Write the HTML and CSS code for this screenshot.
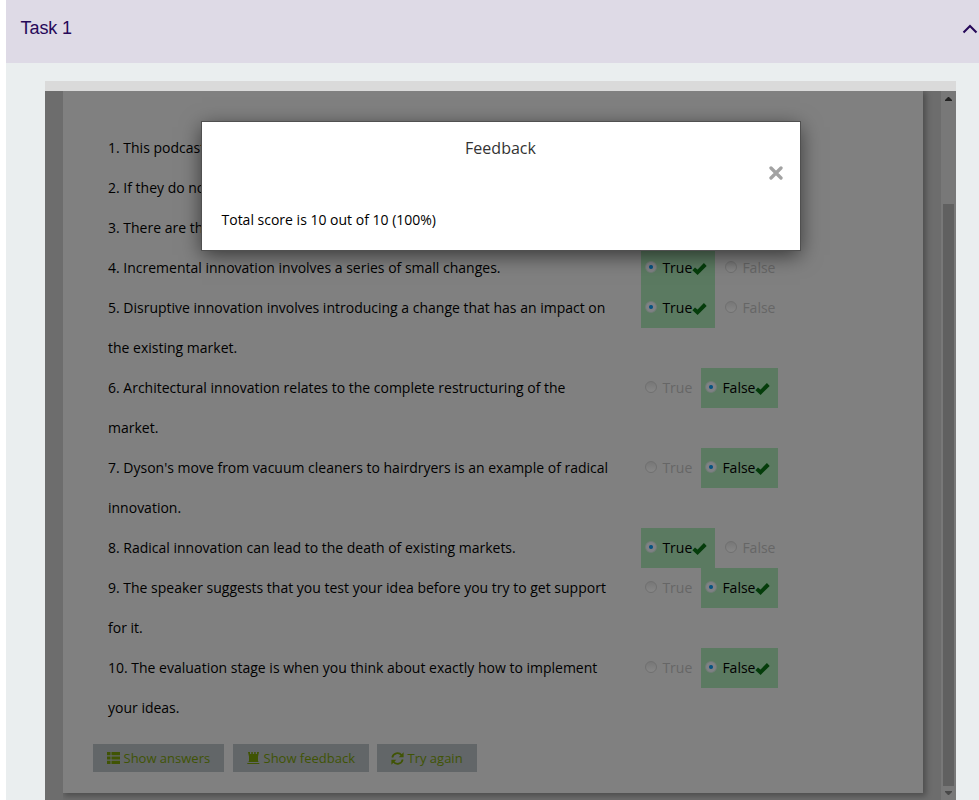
FILE: index.html
```html
<!DOCTYPE html>
<html lang="en">
<head>
<meta charset="utf-8">
<title>Task 1</title>
<link rel="stylesheet" href="styles.css">
</head>
<body>
<svg class="defs" width="0" height="0">
  <symbol id="check" viewBox="0 0 15 12"><path d="M1.700 5.900 5.500 9.300 13.300 1.500" fill="none" stroke="#053d0b" stroke-width="3.900"/></symbol>
</svg>
<section class="task">
  <header class="task-head">
    <h1>Task 1</h1>
    <svg class="chevron" width="16" height="12" viewBox="0 0 16 12"><path d="M1.500 9.500 8 3l6.500 6.500" fill="none" stroke="#260859" stroke-width="2.100"/></svg>
  </header>
  <div class="frame">
    <div class="viewport">
      <main class="sheet">
        <ol class="questions">
          <li><p>1. This podcast</p></li>
          <li><p>2. If they do not</p></li>
          <li><p>3. There are three</p></li>
          <li><p>4. Incremental innovation involves a series of small changes.</p>
            <div class="opts"><label class="ok t"><i></i>True<svg><use href="#check"/></svg></label><label class="off"><i></i>False</label></div></li>
          <li><p>5. Disruptive innovation involves introducing a change that has an impact on<br>the existing market.</p>
            <div class="opts"><label class="ok t"><i></i>True<svg><use href="#check"/></svg></label><label class="off"><i></i>False</label></div></li>
          <li><p>6. Architectural innovation relates to the complete restructuring of the<br>market.</p>
            <div class="opts"><label class="off t"><i></i>True</label><label class="ok"><i></i>False<svg><use href="#check"/></svg></label></div></li>
          <li><p>7. Dyson's move from vacuum cleaners to hairdryers is an example of radical<br>innovation.</p>
            <div class="opts"><label class="off t"><i></i>True</label><label class="ok"><i></i>False<svg><use href="#check"/></svg></label></div></li>
          <li><p>8. Radical innovation can lead to the death of existing markets.</p>
            <div class="opts"><label class="ok t"><i></i>True<svg><use href="#check"/></svg></label><label class="off"><i></i>False</label></div></li>
          <li><p>9. The speaker suggests that you test your idea before you try to get support<br>for it.</p>
            <div class="opts"><label class="off t"><i></i>True</label><label class="ok"><i></i>False<svg><use href="#check"/></svg></label></div></li>
          <li><p>10. The evaluation stage is when you think about exactly how to implement<br>your ideas.</p>
            <div class="opts"><label class="off t"><i></i>True</label><label class="ok"><i></i>False<svg><use href="#check"/></svg></label></div></li>
        </ol>
        <div class="buttons">
          <button class="b1"><svg width="14" height="12" viewBox="0 0 14 12"><path d="M0 0h3.500v3.200H0zM4.500 0H13v3.200H4.500zM0 4.400h3.500v3.200H0zM4.500 4.400H13v3.200H4.500zM0 8.800h3.500V12H0zM4.500 8.800H13V12H4.500z"/></svg><span>Show answers</span></button>
          <button class="b2"><svg width="14" height="12" viewBox="0 0 14 12"><path d="M1 0h2v2h1.300V0h1.500v2h1.400V0h1.500v2H10V0h2l-1 4.500V9l.7 1H1.300L2 9V4.500zM.3 11h12v1H.3z"/></svg><span>Show feedback</span></button>
          <button class="b3"><svg width="14" height="13" viewBox="0 0 14 13"><path d="M1.300 5.500A5.200 5.200 0 0 1 10.600 3.300M11.700 7.500A5.200 5.200 0 0 1 2.400 9.700" fill="none" stroke="#405404" stroke-width="1.700"/><path d="M12.600.3v5H7.700zM.4 12.700v-5h4.900z"/></svg><span>Try again</span></button>
        </div>
      </main>
      <div class="scrollbar">
        <svg width="7" height="4" viewBox="0 0 7 4"><path d="M0 4V3l3-3h1l3 3v1z" fill="#222"/></svg>
        <div class="thumb"></div>
        <svg width="7" height="4" viewBox="0 0 7 4"><path d="M0 0v1l3 3h1l3-3V0z" fill="#484848"/></svg>
      </div>
    </div>
    <div class="dialog" role="dialog">
      <h2>Feedback</h2>
      <svg class="close" width="14" height="14" viewBox="0 0 14 14"><path d="m2 2 10 10M12 2 2 12" stroke="#a2a2a2" stroke-width="3.300" stroke-linecap="round"/></svg>
      <p>Total score is 10 out of 10 (100%)</p>
    </div>
  </div>
</section>
</body>
</html>
```

FILE: styles.css
```css
* { box-sizing: border-box; }
html, body { height: 100%; overflow: hidden; }
body { margin: 0; background: #fff; font: 14px "Open Sans", "Noto Sans", sans-serif; color: #000; }
h1, h2, p, ol { margin: 0; padding: 0; }
.defs { position: absolute; }

.task { margin-left: 6px; height: 800px; background: #eaeeef; }
.task-head { height: 63px; background: #dedae6; display: flex; justify-content: space-between; padding: 17px 1px 0 14.600px; }
.task-head h1 { margin-top: 1px; font: 400 18px/21px "Liberation Sans", Arial, sans-serif; letter-spacing: -.1px; color: #260859; }
.chevron { margin-top: 6px; }

.frame { position: relative; margin: 18px 23px 0 39px; border-top: 10px solid #dadada; height: 719px; overflow: hidden; }
.viewport { display: flex; justify-content: space-between; height: 709px; background: #6d6d6d; padding-left: 18px; }
.sheet { width: 860px; height: 702px; background: #808080; padding: 37px 0 0 45px; box-shadow: 2px 2px 6px 1px rgba(0,0,0,.3); clip-path: inset(0 -12px -12px 0); }
.questions { list-style: none; line-height: 40px; }
.questions li { display: flex; align-items: flex-start; }
.questions p { width: 533px; white-space: nowrap; }
.opts { display: flex; gap: 6px; }
.opts label { display: flex; align-items: center; width: 77px; height: 40px; padding-left: 4px; }
.opts .t.ok { width: 74px; }
.opts .t.off { width: 54px; }
.opts i { width: 12px; height: 12px; margin: -2px 5.400px 0 0; flex: none; border-radius: 50%; border: 1px solid #707070; background: linear-gradient(#777, #878787); }
.ok { background: #5b7a61; }
.ok i { border-color: #6f7c75; background: radial-gradient(circle, #075281 0 1.500px, #7f8184 2.500px); }
.off { color: #666; }
.off i { border-color: #707070; }
.opts svg { width: 15px; height: 12px; margin-top: 1px; flex: none; }

.buttons { display: flex; gap: 9px; margin: 16px 0 0 -15px; }
button { display: flex; align-items: center; height: 28px; padding: 0 0 0 14px; border: 0; background: #626668; font: 13px "Open Sans", sans-serif; color: #405404; fill: #405404; white-space: nowrap; }
button svg { flex: none; margin-right: 2.500px; }
.b1 { width: 131px; }
.b2 { width: 136px; }
.b3 { width: 100px; margin-left: -1px; }

.scrollbar { width: 15px; background: #787878; display: flex; flex-direction: column; align-items: center; padding-top: 6px; }
.thumb { width: 11px; height: 582px; margin: 103px 0 5px; background: #606060; }

.dialog { position: absolute; left: 157px; top: 31px; width: 598px; height: 128px; background: #fff; box-shadow: 0 0 0 1px #505050, 0 5px 20px rgba(0,0,0,.6); }
.dialog h2 { padding: 14px 1px 0 0; text-align: center; font-size: 16px; line-height: 24px; font-weight: 400; color: #333; }
.close { display: block; margin: 6px 17px 0 auto; }
.dialog p { margin: 30px 0 0 19.500px; line-height: 20px; }
```
